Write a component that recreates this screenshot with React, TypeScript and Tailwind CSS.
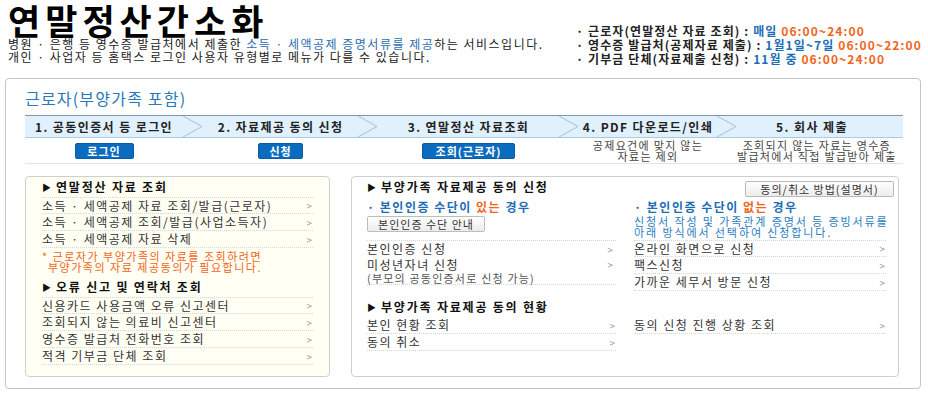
import React from 'react'

const font = "font-['Noto_Sans_CJK_KR','Noto_Sans_CJK_SC',sans-serif]"

const steps = [
  { w: 'w-[178px]', label: '1. 공동인증서 등 로그인', btn: '로그인', bw: 'w-[59px]' },
  { w: 'w-[175px]', label: '2. 자료제공 동의 신청', btn: '신청', bw: 'w-[45px]' },
  { w: 'w-[201px]', label: '3. 연말정산 자료조회', btn: '조회(근로자)', bw: 'w-[93px]' },
  { w: 'w-[158px]', label: '4. PDF 다운로드/인쇄', desc: ['공제요건에 맞지 않는', '자료는 제외'] },
  { w: 'w-[166px]', label: '5. 회사 제출', desc: ['조회되지 않는 자료는 영수증', '발급처에서 직접 발급받아 제출'], last: true },
]

function Chevron() {
  return (
    <svg width="20" height="21" viewBox="0 0 20 21" className="shrink-0">
      <polyline points="0,0 19,10.5 0,21" fill="none" stroke="#9fc1de" strokeWidth="1" />
    </svg>
  )
}

function Heading({ children }: { children: React.ReactNode }) {
  return (
    <div className="h-[20px] flex items-center gap-[5px] text-[12px] font-bold text-[#111] tracking-[1.8px]">
      <span className="text-[9px] leading-none tracking-normal">▶</span>
      <span>{children}</span>
    </div>
  )
}

function Row({ text, first }: { text: string; first?: boolean }) {
  return (
    <div
      className={`h-[17px] flex items-center justify-between border-b border-dotted border-[#d6d6d6] text-[12px] text-[#333] ${
        first ? 'border-t' : ''
      }`}
    >
      <span>{text}</span>
      <span className="text-[10px] text-[#999] pr-[1px] tracking-normal">&gt;</span>
    </div>
  )
}

export default function App() {
  return (
    <div className={`w-[928px] h-[394px] bg-white overflow-hidden tracking-[1.5px] ${font} text-[#222]`}>
      {/* Header */}
      <div className="h-[78px] flex">
        <div className="w-[576px] pl-[8px]">
          <h1 className="pt-[2px] text-[35px] font-bold leading-[36px] tracking-[5px] text-black">연말정산간소화</h1>
          <p className="text-[12px] leading-[12px] text-[#222]">
            병원 · 은행 등 영수증 발급처에서 제출한{' '}
            <span className="text-[#2b6cb0]">소득 · 세액공제 증명서류를 제공</span>하는 서비스입니다.
          </p>
          <p className="text-[12px] leading-[13px] text-[#222]">
            개인 · 사업자 등 홈택스 로그인 사용자 유형별로 메뉴가 다를 수 있습니다.
          </p>
        </div>
        <div className="pt-[24px] text-[12px] leading-[14px] font-bold text-[#222] tracking-[1.1px] whitespace-nowrap">
          <p>
            · 근로자(연말정산 자료 조회) : <span className="text-[#1d6db5]">매일</span>{' '}
            <span className="text-[#f0651a]">06:00~24:00</span>
          </p>
          <p>
            · 영수증 발급처(공제자료 제출) : <span className="text-[#1d6db5]">1월1일~7일</span>{' '}
            <span className="text-[#f0651a]">06:00~22:00</span>
          </p>
          <p>
            · 기부금 단체(자료제출 신청) : <span className="text-[#1d6db5]">11월 중</span>{' '}
            <span className="text-[#f0651a]">06:00~24:00</span>
          </p>
        </div>
      </div>

      {/* Main box */}
      <div className="ml-[5px] w-[916px] h-[311px] border border-[#c4c4c4] rounded-[4px] pl-[19px] pt-[9px]">
        <h2 className="text-[16px] leading-[20px] text-[#2a78b8] tracking-[1.2px]">근로자(부양가족 포함)</h2>

        {/* Steps */}
        <div className="mt-[7px] w-[878px] h-[23px] flex bg-[#e0f0fc] border-t border-t-[#8196ab] border-b border-b-[#a8cbe8]">
          {steps.map((s) => (
            <div key={s.label} className={`${s.w} flex`}>
              <div
                className={`flex-1 flex items-center justify-center text-[12px] font-bold text-[#222] tracking-[1.4px] ${
                  s.last ? 'pr-[16px]' : ''
                }`}
              >
                {s.label}
              </div>
              {!s.last && <Chevron />}
            </div>
          ))}
        </div>
        <div className="w-[878px] h-[26px] flex border-b border-[#e4e4e4]">
          {steps.map((s) => (
            <div key={s.label} className={`${s.w} flex`}>
              <div className={`flex-1 flex justify-center ${s.last ? 'pr-[12px]' : ''}`}>
                {s.btn ? (
                  <button
                    className={`${s.bw} mt-[5px] h-[16px] rounded-[2px] bg-[#0b6cbf] border border-[#0a5ca6] text-white text-[11px] font-bold leading-[14px] tracking-[1px]`}
                  >
                    {s.btn}
                  </button>
                ) : (
                  <div className="pt-[2px] text-center text-[11px] leading-[11px] text-[#444] tracking-[1.3px] whitespace-nowrap">
                    <p>{s.desc![0]}</p>
                    <p>{s.desc![1]}</p>
                  </div>
                )}
              </div>
              {!s.last && <div className="w-[20px]" />}
            </div>
          ))}
        </div>

        {/* Panels */}
        <div className="mt-[12px] flex gap-[21px]">
          <div className="w-[305px] h-[201px] border border-[#cfcfcf] rounded-[4px] bg-[#fffff4] px-[16px]">
            <Heading>연말정산 자료 조회</Heading>
            <Row first text="소득 · 세액공제 자료 조회/발급(근로자)" />
            <Row text="소득 · 세액공제 조회/발급(사업소득자)" />
            <Row text="소득 · 세액공제 자료 삭제" />
            <div className="pt-[3px] text-[11px] leading-[11px] text-[#f0651a] tracking-[1.5px]">
              <p>* 근로자가 부양가족의 자료를 조회하려면</p>
              <p className="pl-[6px]">부양가족의 자료 제공동의가 필요합니다.</p>
            </div>
            <div className="mt-[4px]">
              <Heading>오류 신고 및 연락처 조회</Heading>
            </div>
            <Row first text="신용카드 사용금액 오류 신고센터" />
            <Row text="조회되지 않는 의료비 신고센터" />
            <Row text="영수증 발급처 전화번호 조회" />
            <Row text="적격 기부금 단체 조회" />
          </div>

          <div className="w-[548px] h-[201px] border border-[#cfcfcf] rounded-[4px] bg-white pl-[15px]">
            <div className="flex items-center justify-between pr-[4px]">
              <Heading>부양가족 자료제공 동의 신청</Heading>
              <button className="w-[149px] h-[16px] mt-[3px] border border-[#b9b9b9] rounded-[2px] bg-gradient-to-b from-white to-[#ececec] text-[11px] leading-[14px] text-[#333] tracking-[1px]">
                동의/취소 방법(설명서)
              </button>
            </div>
            <div className="grid grid-cols-[249px_252px] gap-x-[18px] mt-[1px]">
              <div>
                <div className="h-[42px]">
                  <p className="h-[18px] leading-[18px] text-[12px] font-bold text-[#1d6db5] tracking-[1.5px]">
                    · 본인인증 수단이 <span className="text-[#f0651a]">있는</span> 경우
                  </p>
                  <button className="block w-[118px] h-[16px] border border-[#bdbdbd] rounded-[2px] bg-gradient-to-b from-white to-[#ececec] text-[11px] leading-[14px] text-[#333] tracking-[1px]">
                    본인인증 수단 안내
                  </button>
                </div>
                <div className="border-t border-dotted border-[#d6d6d6] h-[17px] flex items-center justify-between text-[12px] text-[#333]">
                  <span>본인인증 신청</span>
                  <span className="text-[10px] text-[#999] pr-[3px] tracking-normal">&gt;</span>
                </div>
                <div className="border-b border-dotted border-[#d6d6d6] text-[#333]">
                  <div className="h-[15px] flex items-center justify-between text-[12px]">
                    <span>미성년자녀 신청</span>
                    <span className="text-[10px] text-[#999] pr-[3px] tracking-normal">&gt;</span>
                  </div>
                  <p className="text-[11px] leading-[12px] text-[#555] tracking-[1.2px]">(부모의 공동인증서로 신청 가능)</p>
                </div>
              </div>
              <div>
                <div className="h-[42px]">
                  <p className="h-[18px] leading-[18px] text-[12px] font-bold text-[#1d6db5] tracking-[1.5px]">
                    · 본인인증 수단이 <span className="text-[#f0651a]">없는</span> 경우
                  </p>
                  <p className="text-[11px] leading-[11px] text-[#2a7dc0] tracking-[1.9px] whitespace-nowrap">
                    신청서 작성 및 가족관계 증명서 등 증빙서류를
                  </p>
                  <p className="text-[11px] leading-[11px] text-[#2a7dc0] tracking-[1.9px] whitespace-nowrap">
                    아래 방식에서 선택하여 신청합니다.
                  </p>
                </div>
                <Row first text="온라인 화면으로 신청" />
                <Row text="팩스신청" />
                <Row text="가까운 세무서 방문 신청" />
              </div>
            </div>

            <div className="mt-[6px]">
              <Heading>부양가족 자료제공 동의 현황</Heading>
            </div>
            <div className="grid grid-cols-[249px_252px] gap-x-[18px]">
              <div>
                <Row text="본인 현황 조회" />
                <Row text="동의 취소" />
              </div>
              <div>
                <Row text="동의 신청 진행 상황 조회" />
              </div>
            </div>
          </div>
        </div>
      </div>
    </div>
  )
}
